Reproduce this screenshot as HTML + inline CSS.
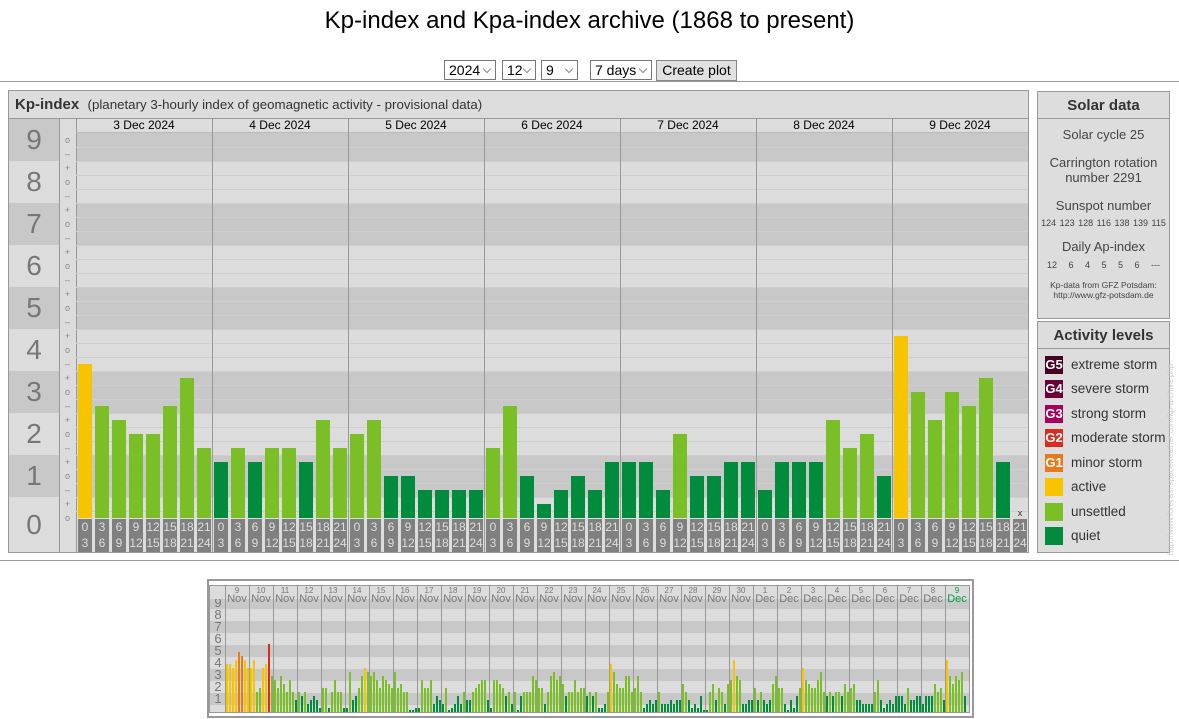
<!DOCTYPE html>
<html><head><meta charset="utf-8">
<style>
*{margin:0;padding:0;box-sizing:border-box}
body{width:1179px;height:719px;background:#fff;font-family:"Liberation Sans",Arial,sans-serif;position:relative;overflow:hidden;color:#000}
.a{position:absolute}
.sel{position:absolute;top:60px;height:20px;border:1px solid #777;background:#fff;font-size:14px;line-height:18px;padding-left:4px}
.sel:after{content:"";position:absolute;right:5px;top:5px;width:5px;height:5px;border-right:1px solid #888;border-bottom:1px solid #888;transform:rotate(45deg)}
.hl{position:absolute;left:0;width:1179px;height:1px;background:#999}
.lg{position:absolute;left:1045px;width:18px;height:18px;color:#fff;font-size:13px;font-weight:bold;text-align:center;line-height:18px}
.lt{position:absolute;left:1071px;font-size:13.5px;color:#333;line-height:18px}
</style></head><body>
<div class="a" style="left:0;top:7px;width:1179px;text-align:center;font-size:24px;">Kp-index and Kpa-index archive (1868 to present)</div>
<div class="sel" style="left:444px;width:52px">2024</div>
<div class="sel" style="left:502px;width:34px">12</div>
<div class="sel" style="left:541px;width:37px">9</div>
<div class="sel" style="left:590px;width:62px">7 days</div>
<div class="a" style="left:656px;top:60px;width:81px;height:21px;border:1px solid #888;background:#e1e1e1;font-size:14px;text-align:center;line-height:19px">Create plot</div>
<div class="hl" style="top:81px"></div>
<div class="hl" style="top:560px"></div>

<div id="main" class="a" style="left:8px;top:90px;width:1021px;height:463px;border:1px solid #999;background:#ddd;overflow:hidden">
<div class="a" style="left:6px;top:5px;font-size:15px;color:#333;white-space:nowrap"><b>Kp-index</b>&nbsp; <span style="font-size:13.3px">(planetary 3-hourly index of geomagnetic activity - provisional data)</span></div>
<div class="a" style="left:0;top:27px;width:1020px;height:1px;background:#999"></div>
</div>

<div class="a" style="left:1037px;top:91px;width:133px;height:228px;border:1px solid #999;background:#ddd;color:#444;text-align:center">
<div style="height:27px;border-bottom:1px solid #999;font-size:15px;font-weight:bold;line-height:27px;color:#333">Solar data</div>
<div style="font-size:13px;margin-top:8px">Solar cycle 25</div>
<div style="font-size:13px;margin-top:13px;line-height:15px">Carrington rotation<br>number 2291</div>
<div style="font-size:13px;margin-top:13px">Sunspot number</div>
<div style="font-size:9px;margin-top:5px;white-space:nowrap;word-spacing:1px">124 123 128 116 138 139 115</div>
<div style="font-size:13px;margin-top:11px">Daily Ap-index</div>
<div style="font-size:9px;margin-top:6px;word-spacing:9px">12 6 4 5 5 6 ---</div>
<div style="font-size:8.5px;margin-top:10px;line-height:10px">Kp-data from GFZ Potsdam:<br>http://www.gfz-potsdam.de</div>
</div>

<div class="a" style="left:1037px;top:321px;width:133px;height:232px;border:1px solid #999;background:#ddd">
<div style="height:27px;border-bottom:1px solid #999;font-size:15px;font-weight:bold;line-height:27px;color:#333;text-align:center">Activity levels</div>
</div>
<div class="lg" style="top:356px;background:#4a0020">G5</div><div class="lt" style="top:356px">extreme storm</div>
<div class="lg" style="top:380px;background:#6b0038">G4</div><div class="lt" style="top:380px">severe storm</div>
<div class="lg" style="top:405px;background:#a8005a">G3</div><div class="lt" style="top:405px">strong storm</div>
<div class="lg" style="top:429px;background:#d92c1e">G2</div><div class="lt" style="top:429px">moderate storm</div>
<div class="lg" style="top:454px;background:#e87a1c">G1</div><div class="lt" style="top:454px">minor storm</div>
<div class="lg" style="top:478px;background:#f8c400"></div><div class="lt" style="top:478px">active</div>
<div class="lg" style="top:503px;background:#7abf26"></div><div class="lt" style="top:503px">unsettled</div>
<div class="lg" style="top:527px;background:#008c3c"></div><div class="lt" style="top:527px">quiet</div>
<div class="a" style="left:1166px;top:555px;transform:rotate(-90deg);transform-origin:0 0;font-size:8px;color:#ccc;white-space:nowrap">http://www.forecast.spaceweather.com/kp-archive.php</div>

<div class="a" style="left:207px;top:579px;width:767px;height:139px;border:2px solid #999;background:#fff"></div>
<div id="mini" class="a" style="left:209px;top:585px;width:761px;height:128px;background:#ddd;overflow:hidden;border:1px solid #999"></div>

<script>
(function(){
var M=document.getElementById('main');
function box(p,x,y,w,h,c,extra){var d=document.createElement('div');d.className='a';d.style.cssText='left:'+x+'px;top:'+y+'px;width:'+w+'px;height:'+h+'px;background:'+c+';'+(extra||'');p.appendChild(d);return d;}
var ox=9,oy=91;
for(var n=0;n<=9;n++){
 var cy=518-42*n, t=cy-21, b=cy+21;
 if(n==9)t=119; if(n==0)b=552;
 var dark=(n%2==1);
 box(M,0,t-oy,50,b-t,dark?'#c8c8c8':'#dcdcdc','font-size:28px;color:#777;text-align:center;line-height:'+(b-t)+'px').textContent=n;
 var pt=Math.max(t,133), pb=Math.min(b,518);
 box(M,76-ox,pt-oy,1020-(76-ox),pb-pt,dark?'#c8c8c8':'#dcdcdc');
}
box(M,50,119-oy,1,552-119,'#999');
box(M,59-ox,119-oy,17,433,'#dcdcdc');
box(M,59-ox,119-oy,1,433,'#999');
box(M,76-ox,119-oy,1,433,'#999');
for(var k=0;k<=27;k++){var y=518-14*k; var s=k%3==0?'o':(k%3==1?'+':'\u2013');
 if(y>135) box(M,59-ox,y-7-oy,17,14,'transparent','font-size:9px;color:#888;text-align:center;line-height:14px').textContent=s;}
for(var k=0;k<27;k++){var y=511-14*k; if(y>133) box(M,76-ox,y-oy,1020-(76-ox),1,'#cfcfcf');}
box(M,76-ox,132-oy,1020-(76-ox),1,'#bbb');
var days=['3 Dec 2024','4 Dec 2024','5 Dec 2024','6 Dec 2024','7 Dec 2024','8 Dec 2024','9 Dec 2024'];
var T=[[11,8,7,6,6,8,10,5],[4,5,4,5,5,4,7,5],[6,7,3,3,2,2,2,2],[5,8,3,1,2,3,2,4],[4,4,2,6,3,3,4,4],[2,4,4,4,7,5,6,3],[13,9,7,9,8,10,4,-1]];
var hr=['0','3','6','9','12','15','18','21','24'];
function col(t){return t<=4?'#008c3c':t<=10?'#7abf26':t<=13?'#f8c400':t<=16?'#e87a1c':'#d92c1e';}
for(var d=0;d<7;d++){var dx=76+136*d;
 box(M,dx-ox,119-oy,136,13,'transparent','font-size:12px;text-align:center;line-height:13px').textContent=days[d];
 if(d>0)box(M,dx-ox,119-oy,1,433,'#999');
 for(var i=0;i<8;i++){var bx=78+136*d+17*i,tv=T[d][i];
  if(tv>=0){var bt=518-14*tv; box(M,bx-ox,bt-oy,14,518-bt,col(tv));}
  else box(M,bx-ox,508-oy,14,10,'transparent','font-size:9px;text-align:center;color:#333;line-height:10px').textContent='x';
  var l=box(M,bx-ox,519-oy,14,33,'#808080','font-size:12px;color:#ddd;text-align:center;line-height:16px');
  l.innerHTML=hr[i]+'<br>'+hr[i+1];
 }}
var N=document.getElementById('mini');var mx=210,my=586;
box(N,0,0,760,128,'#dcdcdc');
for(var n=1;n<=9;n++){var cy=711-12*n;var dark=n%2==1;
 box(N,0,cy-6-my,760,12,dark?'#c8c8c8':'#dcdcdc');
 box(N,0,cy-6-my,16,12,'transparent','font-size:13px;color:#777;text-align:center;line-height:12px').textContent=n;}
box(N,0,0,760,13,'#dcdcdc');
var MT=[[12,12,11,13,15,14,13,11],[11,13,5,6,11,12,17,9],[8,6,9,7,5,8,5,3],[5,4,5,2,3,4,3,1],[6,6,1,5,8,5,5,1],[1,10,3,4,6,9,11,10],[9,10,8,6,9,8,7,6],[10,6,7,5,5,0,0,1],[1,8,6,6,8,2,4,3],[2,6,0,1,2,4,2,5],[3,3,5,6,7,8,8,3],[1,8,8,7,6,4,5,2],[5,0,4,5,5,5,9,8],[6,6,2,5,9,10,8,9],[7,4,5,5,8,5,6,6],[4,5,4,5,1,1,2,5],[12,10,7,6,6,9,9,5],[6,9,5,1,2,3,2,3],[5,2,2,2,3,2,3,3],[7,5,3,1,2,1,4,0],[0,5,7,3,6,5,2,7],[8,13,9,8,2,2,3,3],[6,3,5,3,2,3,7,9],[6,6,2,0,3,1,4,6]].concat(T);
for(var d=0;d<31;d++){var dx=225+24*d;var dn=d<22?(9+d):(d-21);var mo=d<22?'Nov':'Dec';
 var last=d==30;
 var h=box(N,dx-mx,0,24,14,'transparent','text-align:center;color:'+(last?'#00a040':'#777')+';line-height:6px');
 h.innerHTML='<span style="font-size:8px">'+dn+'</span><br><span style="font-size:11px;line-height:10px">'+mo+'</span>';
 box(N,dx-mx,0,1,128,'#999');
 for(var i=0;i<8;i++){var tv=MT[d][i];if(tv<0)continue;var bh=Math.max(tv*4,2);
  box(N,dx+1+3*i-mx,712-bh-my,2,bh,col(tv));}}
})();
</script>
</body></html>
